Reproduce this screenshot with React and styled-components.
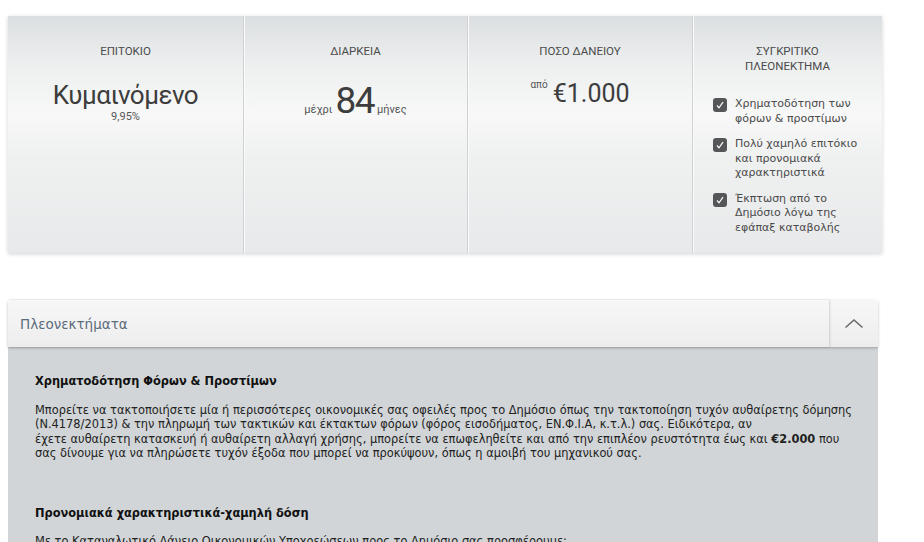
import React from 'react';
import styled, { createGlobalStyle } from 'styled-components';

const GlobalStyle = createGlobalStyle`
  body {
    margin: 0;
    background: #ffffff;
    font-family: "Noto Sans", "DejaVu Sans", sans-serif;
  }
`;

const Page = styled.div`
  padding: 16px 0 0 8px;
  display: flex;
  flex-direction: column;
  gap: 47px;
`;

const Card = styled.div`
  width: 874px;
  height: 237px;
  display: flex;
  background: linear-gradient(to bottom, #dcdfe1 0%, #eef0f0 22%, #f8f8f8 42%, #eff0f0 60%, #e8e9ea 100%);
  box-shadow: 0 1px 4px rgba(0, 0, 0, 0.18);
`;

const Column = styled.div`
  width: ${p => p.w}px;
  flex: none;
  display: flex;
  flex-direction: column;
  align-items: center;
  padding-top: 28px;
  box-sizing: border-box;
  border-right: ${p => (p.last ? 'none' : '1px solid #cfd2d4')};
  box-shadow: ${p => (p.last ? 'none' : '1px 0 0 #fbfbfb')};
`;

const Title = styled.div`
  font-family: Roboto, "Liberation Sans", sans-serif;
  font-size: 11.5px;
  line-height: 15px;
  color: #4a4a4a;
  text-align: center;
  text-transform: uppercase;
`;

const BigValue = styled.div`
  margin-top: 21px;
  font-family: Roboto, "Liberation Sans", sans-serif;
  font-size: 26px;
  letter-spacing: -0.5px;
  line-height: 30px;
  color: #3d3d3d;
  text-align: center;
`;

const SubValue = styled.div`
  margin-top: 1px;
  font-family: Roboto, "Liberation Sans", sans-serif;
  font-size: 11px;
  line-height: 12px;
  color: #555;
  text-align: center;
`;

const Duration = styled.div`
  margin-top: 22px;
  display: flex;
  align-items: baseline;
  gap: 3px;
  font-family: Roboto, "Liberation Sans", sans-serif;
  color: #3d3d3d;
`;

const Small = styled.span`
  font-size: ${p => p.size || 11}px;
  color: #555;
  position: relative;
  top: ${p => p.up || 0}px;
`;

const Huge = styled.span`
  font-size: 37px;
  letter-spacing: -1.5px;
  line-height: 40px;
`;

const Amount = styled.div`
  margin-top: 21px;
  display: flex;
  align-items: flex-start;
  gap: 5px;
  font-family: Roboto, "Liberation Sans", sans-serif;
  color: #3d3d3d;
`;

const AmountValue = styled.span`
  font-size: 25px;
  line-height: 28px;
`;

const CheckList = styled.ul`
  list-style: none;
  margin: 23px 0 0;
  padding: 0 0 0 20px;
  align-self: stretch;
  display: flex;
  flex-direction: column;
  gap: 11px;
`;

const CheckItem = styled.li`
  display: flex;
  gap: 8px;
  font-family: "DejaVu Sans", sans-serif;
  font-size: 11px;
  line-height: 14.5px;
  color: #4a4a4a;
  white-space: nowrap;
`;

const Box = styled.span`
  flex: none;
  width: 14px;
  height: 14px;
  margin-top: 1px;
  border-radius: 3px;
  background: #555657;
  display: flex;
  align-items: center;
  justify-content: center;
`;

const Section = styled.div`
  width: 870px;
  display: flex;
  flex-direction: column;
`;

const Header = styled.div`
  height: 47px;
  display: flex;
  background: linear-gradient(to bottom, #f7f7f7, #ededee);
  box-shadow: 0 1px 3px rgba(0, 0, 0, 0.25);
  border-radius: 3px 3px 0 0;
  position: relative;
  z-index: 1;
`;

const HeaderTitle = styled.div`
  flex: 1;
  display: flex;
  align-items: center;
  padding-left: 12px;
  font-family: "DejaVu Sans", sans-serif;
  font-size: 13.5px;
  color: #5b6b7b;
  box-shadow: 1px 0 2px rgba(0, 0, 0, 0.15);
`;

const Toggle = styled.button`
  width: 49px;
  border: none;
  background: transparent;
  display: flex;
  align-items: center;
  justify-content: center;
  padding: 0;
`;

const Body = styled.div`
  background: #d1d5d7;
  padding: 27px 27px 0;
  height: 194px;
  overflow: hidden;
  font-family: "DejaVu Sans", sans-serif;
  font-size: 11.4px;
  line-height: 14.5px;
  color: #222;
`;

const Heading = styled.h4`
  margin: 0 0 14px;
  font-size: 11.4px;
  font-weight: bold;
  color: #111;
`;

const Para = styled.p`
  margin: 0 0 45px;
  white-space: nowrap;
`;

const Check = () => (
  <svg width="10" height="10" viewBox="0 0 10 10">
    <polyline points="2,5.5 4,7.8 8,2.2" fill="none" stroke="#fff" strokeWidth="1.2" />
  </svg>
);

const Chevron = () => (
  <svg width="20" height="11" viewBox="0 0 20 11">
    <polyline points="1.5,9.5 10,2 18.5,9.5" fill="none" stroke="#6a6a6a" strokeWidth="1.6" />
  </svg>
);

const advantages = [
  ['Χρηματοδότηση των', 'φόρων & προστίμων'],
  ['Πολύ χαμηλό επιτόκιο', 'και προνομιακά', 'χαρακτηριστικά'],
  ['Έκπτωση από το', 'Δημόσιο λόγω της', 'εφάπαξ καταβολής'],
];

const App = () => (
  <>
    <GlobalStyle />
    <Page>
      <Card>
        <Column w={236}>
          <Title>Επιτοκιο</Title>
          <BigValue>Κυμαινόμενο</BigValue>
          <SubValue>9,95%</SubValue>
        </Column>
        <Column w={224}>
          <Title>Διαρκεια</Title>
          <Duration>
            <Small>μέχρι</Small>
            <Huge>84</Huge>
            <Small>μήνες</Small>
          </Duration>
        </Column>
        <Column w={225}>
          <Title>Ποσο δανειου</Title>
          <Amount>
            <Small size={10} up={-1}>από</Small>
            <AmountValue>€1.000</AmountValue>
          </Amount>
        </Column>
        <Column w={189} last>
          <Title>Συγκριτικο<br />πλεονεκτημα</Title>
          <CheckList>
            {advantages.map(lines => (
              <CheckItem key={lines[0]}>
                <Box><Check /></Box>
                <span>
                  {lines.map((l, i) => (
                    <React.Fragment key={l}>{i > 0 && <br />}{l}</React.Fragment>
                  ))}
                </span>
              </CheckItem>
            ))}
          </CheckList>
        </Column>
      </Card>

      <Section>
        <Header>
          <HeaderTitle>Πλεονεκτήματα</HeaderTitle>
          <Toggle aria-label="Σύμπτυξη"><Chevron /></Toggle>
        </Header>
        <Body>
          <Heading>Χρηματοδότηση Φόρων & Προστίμων</Heading>
          <Para>
            Μπορείτε να τακτοποιήσετε μία ή περισσότερες οικονομικές σας οφειλές προς το Δημόσιο όπως την τακτοποίηση τυχόν αυθαίρετης δόμησης<br />
            (Ν.4178/2013) & την πληρωμή των τακτικών και έκτακτων φόρων (φόρος εισοδήματος, ΕΝ.Φ.Ι.Α, κ.τ.λ.) σας. Ειδικότερα, αν<br />
            έχετε αυθαίρετη κατασκευή ή αυθαίρετη αλλαγή χρήσης, μπορείτε να επωφεληθείτε και από την επιπλέον ρευστότητα έως και <b>€2.000</b> που<br />
            σας δίνουμε για να πληρώσετε τυχόν έξοδα που μπορεί να προκύψουν, όπως η αμοιβή του μηχανικού σας.
          </Para>
          <Heading>Προνομιακά χαρακτηριστικά-χαμηλή δόση</Heading>
          <Para>Με το Καταναλωτικό Δάνειο Οικονομικών Υποχρεώσεων προς το Δημόσιο σας προσφέρουμε:</Para>
        </Body>
      </Section>
    </Page>
  </>
);

export default App;
